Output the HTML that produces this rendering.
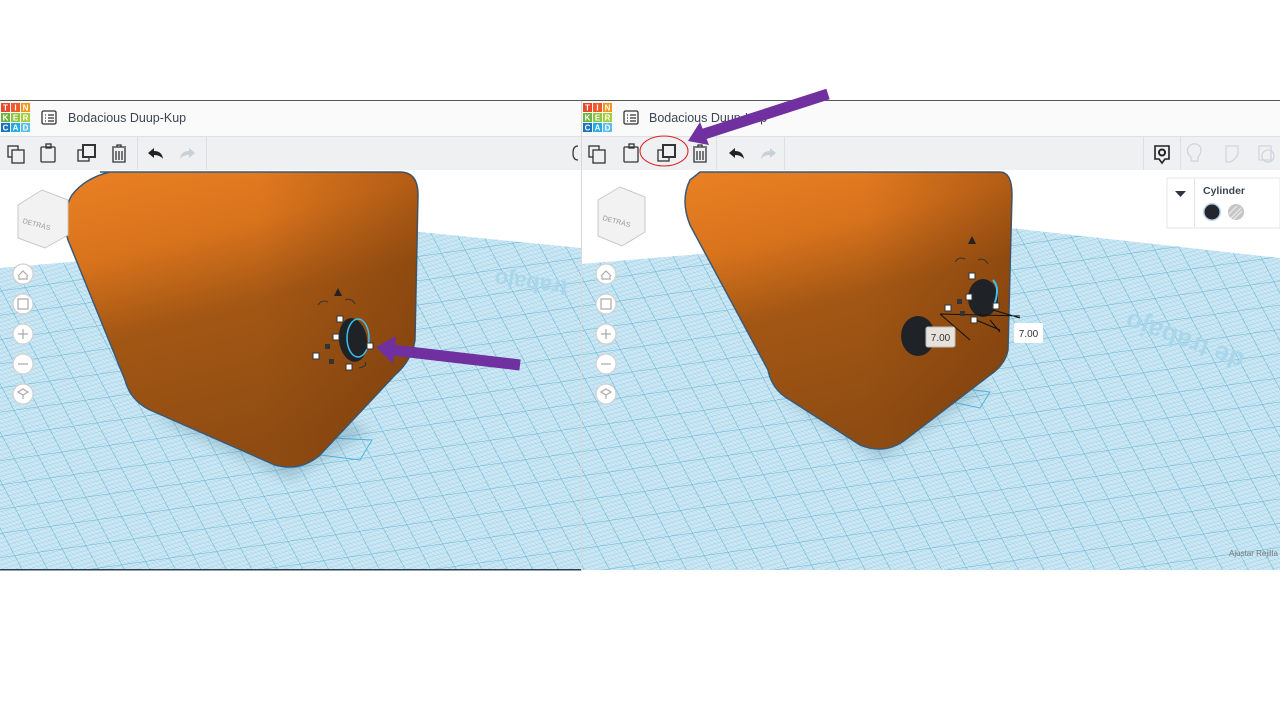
<!DOCTYPE html>
<html><head><meta charset="utf-8"><style>
body{margin:0;width:1280px;height:720px;background:#fff;overflow:hidden;font-family:"Liberation Sans",sans-serif}
svg{position:absolute;left:0;top:0}
</style></head><body>
<svg width="1280" height="720" viewBox="0 0 1280 720" xmlns="http://www.w3.org/2000/svg">
<defs>
<pattern id="g" width="4" height="4" patternUnits="userSpaceOnUse" patternTransform="rotate(-8) skewX(20)">
<rect width="4" height="4" fill="#cde8f4"/><path d="M0 0H4M0 0V4" stroke="#93cbe3" stroke-width="0.7"/></pattern>
<pattern id="G" width="24" height="24" patternUnits="userSpaceOnUse" patternTransform="rotate(-8) skewX(20)">
<rect width="24" height="24" fill="url(#g)"/><path d="M0 0H24M0 0V24" stroke="#5eb0d2" stroke-width="1"/></pattern>
<linearGradient id="o" x1="0" y1="0" x2="0.3" y2="1"><stop offset="0" stop-color="#ea8024"/><stop offset="0.3" stop-color="#d8731c"/><stop offset="0.55" stop-color="#a35714"/><stop offset="1" stop-color="#8f4c12"/></linearGradient>
<linearGradient id="sh" x1="0" y1="0" x2="1" y2="0"><stop offset="0.55" stop-color="#6a3208" stop-opacity="0"/><stop offset="1" stop-color="#6a3208" stop-opacity="0.35"/></linearGradient>
<filter id="bl"><feGaussianBlur stdDeviation="6"/></filter>
<clipPath id="cl"><rect x="0" y="170" width="581" height="400"/></clipPath>
<clipPath id="cr"><rect x="581" y="170" width="699" height="400"/></clipPath>
</defs>
<rect x="0" y="100" width="1280" height="1.5" fill="#555"/>
<!-- LEFT PANEL -->
<rect x="0" y="101" width="581" height="35" fill="#fafafa"/>
<rect x="0" y="136" width="581" height="34" fill="#eff0f2"/>
<rect x="0" y="136" width="581" height="1" fill="#dfe1e5"/>
<rect x="137" y="137" width="1" height="33" fill="#dcdfe3"/>
<rect x="206" y="137" width="1" height="33" fill="#dcdfe3"/>
<rect x="0" y="170" width="581" height="400" fill="#fff"/>
<g clip-path="url(#cl)">
<polygon points="0,268 420,232 581,248 581,570 0,570" fill="url(#G)"/>
<text x="460" y="256" transform="rotate(188 515 265)" font-size="22" font-weight="bold" fill="#a9d6ea">trabajo</text>
<polygon points="330,438 372,440 360,460 320,455" fill="none" stroke="#4ab4e0" stroke-width="1"/>
<path d="M150 415 L290 480 L370 430 L330 415 Z" fill="#5a8aa0" opacity="0.35" filter="url(#bl)"/>
<g>
<path id="bodyL" d="M100 172 L400 172 Q418 172 418 195 L415 340 Q412 360 395 375 L320 455 Q300 472 275 465 L150 410 Q130 400 125 380 L68 240 Q60 215 72 195 Q85 178 110 172 Z" fill="url(#o)" stroke="#3a5a78" stroke-width="1.5"/>
<path d="M100 172 L400 172 Q418 172 418 195 L415 340 Q412 360 395 375 L320 455 Q300 472 275 465 L150 410 Q130 400 125 380 L68 240 Q60 215 72 195 Q85 178 110 172 Z" fill="url(#sh)"/>
</g>
<path d="M18 205 L42 190 L68 200 L68 235 L45 248 L18 238 Z" fill="#f2f2f2" stroke="#c8c8c8"/>
<text x="22" y="225" font-size="7" fill="#999" transform="rotate(15 30 225)">DETRÁS</text>
<g fill="#fff" stroke="#d0d0d0" stroke-width="1.2">
<circle cx="23" cy="274" r="10"/><circle cx="23" cy="304" r="10"/><circle cx="23" cy="334" r="10"/><circle cx="23" cy="364" r="10"/><circle cx="23" cy="394" r="10"/></g>
<g stroke="#aaa" stroke-width="1.2" fill="none"><path d="M18 276 L23 271 L28 276 M19 276 V279 H27 V276"/><rect x="18" y="299" width="10" height="10"/><path d="M18 334 H28 M23 329 V339 M18 364 H28"/><path d="M23 389 L28 392 L23 395 L18 392 Z M23 395 V399"/></g>
<ellipse cx="353" cy="340" rx="14" ry="22" fill="#1f2328" transform="rotate(-8 353 340)"/>
<ellipse cx="358" cy="338" rx="11" ry="19" fill="none" stroke="#3cc0ee" stroke-width="1.5"/>
<path d="M338 288 L342 296 L334 296Z" fill="#222"/>
<path d="M318 305 q4 -6 10 -3 M345 300 q6 -3 10 4 M365 362 q3 4 -6 6" stroke="#333" fill="none"/>
<g fill="#fff" stroke="#333"><rect x="337" y="316" width="6" height="6"/><rect x="333" y="334" width="6" height="6"/><rect x="367" y="343" width="6" height="6"/><rect x="313" y="353" width="6" height="6"/><rect x="346" y="364" width="6" height="6"/></g>
<g fill="#333"><rect x="325" y="344" width="5" height="5"/><rect x="329" y="359" width="5" height="5"/></g>
</g>
<g font-family="Liberation Sans" font-size="8" font-weight="bold" fill="#fff" text-anchor="middle">
<rect x="1" y="103" width="9" height="9" fill="#e8482c"/><rect x="11" y="103" width="9" height="9" fill="#f15a29"/><rect x="21" y="103" width="9" height="9" fill="#f7941e"/>
<rect x="1" y="113" width="9" height="9" fill="#6db33f"/><rect x="11" y="113" width="9" height="9" fill="#8dc63f"/><rect x="21" y="113" width="9" height="9" fill="#a6ce39"/>
<rect x="1" y="123" width="9" height="9" fill="#1b75bc"/><rect x="11" y="123" width="9" height="9" fill="#27aae1"/><rect x="21" y="123" width="9" height="9" fill="#5bc0eb"/>
<text x="5.5" y="110.5">T</text><text x="15.5" y="110.5">I</text><text x="25.5" y="110.5">N</text>
<text x="5.5" y="120.5">K</text><text x="15.5" y="120.5">E</text><text x="25.5" y="120.5">R</text>
<text x="5.5" y="130.5">C</text><text x="15.5" y="130.5">A</text><text x="25.5" y="130.5">D</text></g>
<g stroke="#333" stroke-width="1.3" fill="none"><rect x="42" y="111" width="14" height="13" rx="1.5"/><path d="M45 115h1M48 115h6M45 118h1M48 118h6M45 121h1M48 121h6"/></g>
<text x="68" y="122" font-size="12.5" fill="#3c4652">Bodacious Duup-Kup</text>
<g stroke="#333" stroke-width="1.3" fill="none">
<rect x="8" y="146" width="10" height="11"/><rect x="12" y="150" width="12" height="13" fill="#eff0f2"/>
<rect x="41" y="147" width="14" height="15" rx="1"/><rect x="46" y="144" width="5" height="4"/>
<rect x="78" y="150" width="11" height="11"/><rect x="83" y="145" width="12" height="12" fill="#eff0f2" stroke-width="2"/>
<path d="M112 147h14M117 147v-2h4v2M113 148v14h12v-14M116 151v9M119 151v9M122 151v9"/></g>
<path d="M148 153 l6-5 v3 q8 0 9 8 q-3-4-9-4 v3z" fill="#222"/>
<path d="M195 153 l-6-5 v3 q-8 0 -9 8 q3-4 9-4 v3z" fill="#c8d0d8"/>
<!-- RIGHT PANEL -->
<rect x="581" y="101" width="699" height="35" fill="#fafafa"/>
<rect x="581" y="136" width="699" height="34" fill="#eff0f2"/>
<rect x="581" y="136" width="699" height="1" fill="#dfe1e5"/>
<rect x="716" y="137" width="1" height="33" fill="#dcdfe3"/>
<rect x="784" y="137" width="1" height="33" fill="#dcdfe3"/>
<rect x="1143" y="137" width="1" height="33" fill="#dcdfe3"/>
<rect x="1180" y="137" width="1" height="33" fill="#dcdfe3"/>
<rect x="581" y="170" width="699" height="400" fill="#fff"/>
<g clip-path="url(#cr)">
<polygon points="581,264 1010,228 1280,258 1280,570 581,570" fill="url(#G)"/>
<text x="1080" y="275" transform="rotate(200 1170 300)" font-size="26" font-weight="bold" fill="#a9d6ea">de trabajo</text>
<polygon points="958,388 990,392 980,408 952,402" fill="none" stroke="#4ab4e0" stroke-width="1"/>
<path d="M780 395 L880 460 L990 385 Z" fill="#5a8aa0" opacity="0.35" filter="url(#bl)"/>
<path d="M700 172 L1000 172 Q1012 172 1012 195 L1008 350 Q1005 365 990 375 L905 440 Q885 455 860 445 L790 400 Q772 390 768 370 L690 225 Q680 200 690 180 Z" fill="url(#o)" stroke="#3a5a78" stroke-width="1.5"/>
<path d="M700 172 L1000 172 Q1012 172 1012 195 L1008 350 Q1005 365 990 375 L905 440 Q885 455 860 445 L790 400 Q772 390 768 370 L690 225 Q680 200 690 180 Z" fill="url(#sh)"/>
<path d="M598 200 L620 187 L645 197 L645 232 L622 246 L598 236 Z" fill="#f2f2f2" stroke="#c8c8c8"/>
<text x="602" y="222" font-size="7" fill="#999" transform="rotate(15 610 222)">DETRÁS</text>
<g fill="#fff" stroke="#d0d0d0" stroke-width="1.2">
<circle cx="606" cy="274" r="10"/><circle cx="606" cy="304" r="10"/><circle cx="606" cy="334" r="10"/><circle cx="606" cy="364" r="10"/><circle cx="606" cy="394" r="10"/></g>
<g stroke="#aaa" stroke-width="1.2" fill="none"><path d="M601 276 L606 271 L611 276 M602 276 V279 H610 V276"/><rect x="601" y="299" width="10" height="10"/><path d="M601 334 H611 M606 329 V339 M601 364 H611"/><path d="M606 389 L611 392 L606 395 L601 392 Z M606 395 V399"/></g>
<ellipse cx="918" cy="336" rx="17" ry="20" fill="#1f2328"/>
<ellipse cx="983" cy="298" rx="15" ry="19" fill="#1f2328"/>
<path d="M993 280 q8 8 0 28" stroke="#3cc0ee" stroke-width="2" fill="none"/>
<path d="M972 236 L976 244 L968 244Z" fill="#222"/>
<path d="M955 262 q4 -6 10 -3 M978 260 q6 -3 10 4" stroke="#333" fill="none"/>
<path d="M940 314 L1020 316 M940 314 L970 340 M976 320 L1000 330 M993 310 L1020 318 M990 320 L1000 332" stroke="#111" stroke-width="1"/>
<g fill="#fff" stroke="#333"><rect x="969" y="273" width="6" height="6"/><rect x="966" y="294" width="6" height="6"/><rect x="945" y="305" width="6" height="6"/><rect x="993" y="303" width="6" height="6"/><rect x="971" y="317" width="6" height="6"/></g>
<g fill="#333"><rect x="957" y="299" width="5" height="5"/><rect x="960" y="311" width="5" height="5"/></g>
<rect x="926" y="327" width="29" height="20" rx="2" fill="#e8e2dc" stroke="#bbb"/>
<text x="940.5" y="341" font-size="10" text-anchor="middle" fill="#333">7.00</text>
<rect x="1014" y="323" width="29" height="20" rx="2" fill="#fff"/>
<text x="1028.5" y="337" font-size="10" text-anchor="middle" fill="#333">7.00</text>
<text x="1229" y="556" font-size="8" fill="#777">Ajustar Rejilla</text>
</g>
<rect x="1167" y="178" width="113" height="50" fill="#fff" stroke="#e2e4e8"/>
<rect x="1194" y="179" width="1" height="48" fill="#e2e4e8"/>
<path d="M1175 191 h11 l-5.5 6z" fill="#2d3640"/>
<text x="1203" y="194" font-size="10.5" font-weight="bold" fill="#3c4652">Cylinder</text>
<circle cx="1212" cy="212" r="9" fill="#b9d3ee"/><circle cx="1212" cy="212" r="7.5" fill="#23272c"/>
<circle cx="1236" cy="212" r="8" fill="#c5c5c5"/>
<path d="M1231 218 l10-10 M1229 214 l8-8 M1233 220 l9-9" stroke="#e8e8e8" stroke-width="1.3"/>
<g font-family="Liberation Sans" font-size="8" font-weight="bold" fill="#fff" text-anchor="middle">
<rect x="583" y="103" width="9" height="9" fill="#e8482c"/><rect x="593" y="103" width="9" height="9" fill="#f15a29"/><rect x="603" y="103" width="9" height="9" fill="#f7941e"/>
<rect x="583" y="113" width="9" height="9" fill="#6db33f"/><rect x="593" y="113" width="9" height="9" fill="#8dc63f"/><rect x="603" y="113" width="9" height="9" fill="#a6ce39"/>
<rect x="583" y="123" width="9" height="9" fill="#1b75bc"/><rect x="593" y="123" width="9" height="9" fill="#27aae1"/><rect x="603" y="123" width="9" height="9" fill="#5bc0eb"/>
<text x="587.5" y="110.5">T</text><text x="597.5" y="110.5">I</text><text x="607.5" y="110.5">N</text>
<text x="587.5" y="120.5">K</text><text x="597.5" y="120.5">E</text><text x="607.5" y="120.5">R</text>
<text x="587.5" y="130.5">C</text><text x="597.5" y="130.5">A</text><text x="607.5" y="130.5">D</text></g>
<g stroke="#333" stroke-width="1.3" fill="none"><rect x="624" y="111" width="14" height="13" rx="1.5"/><path d="M627 115h1M630 115h6M627 118h1M630 118h6M627 121h1M630 121h6"/></g>
<text x="649" y="122" font-size="12.5" fill="#3c4652">Bodacious Duup-Kup</text>
<g stroke="#333" stroke-width="1.3" fill="none">
<path d="M578 146 q-5 0 -5 7 q0 7 5 7"/>
<rect x="589" y="146" width="10" height="11"/><rect x="593" y="150" width="12" height="13" fill="#eff0f2"/>
<rect x="624" y="147" width="14" height="15" rx="1"/><rect x="629" y="144" width="5" height="4"/>
<rect x="658" y="150" width="11" height="11"/><rect x="663" y="145" width="12" height="12" fill="#eff0f2" stroke-width="2"/>
<path d="M693 147h14M698 147v-2h4v2M694 148v14h12v-14M697 151v9M700 151v9M703 151v9"/></g>
<path d="M729 153 l6-5 v3 q8 0 9 8 q-3-4-9-4 v3z" fill="#222"/>
<path d="M776 153 l-6-5 v3 q-8 0 -9 8 q3-4 9-4 v3z" fill="#c8d0d8"/>
<path d="M1155 146 h14 v13 h-4 l-3 4 l-3 -4 h-4z" fill="none" stroke="#222" stroke-width="1.6"/><circle cx="1162" cy="152.5" r="3" fill="none" stroke="#222" stroke-width="2"/>
<g stroke="#d0d5dc" stroke-width="1.3" fill="none"><path d="M1191 157 q-5-4 -3-9 q3-5 8-4 q5 1 5 6 q0 4 -3 7 v4 h-7z"/><path d="M1226 146 h12 v8 q-3 6 -8 8 h-4z"/><path d="M1259 146 h12 v14 h-12z"/><circle cx="1268" cy="156" r="6"/></g>
<rect x="0" y="569" width="581" height="1.5" fill="#2d3e50"/>
<rect x="581" y="101" width="1" height="470" fill="#d8d8d8"/>
<ellipse cx="664" cy="151" rx="24" ry="15" fill="none" stroke="#e02020" stroke-width="1"/>
<line x1="520" y1="365" x2="392" y2="350" stroke="#7030a0" stroke-width="11"/>
<polygon points="376,347 396,336 393,364" fill="#7030a0"/>
<line x1="828" y1="94" x2="704" y2="134" stroke="#7030a0" stroke-width="11"/>
<polygon points="688,141 700,122 709,145" fill="#7030a0"/>
</svg>
</body></html>
